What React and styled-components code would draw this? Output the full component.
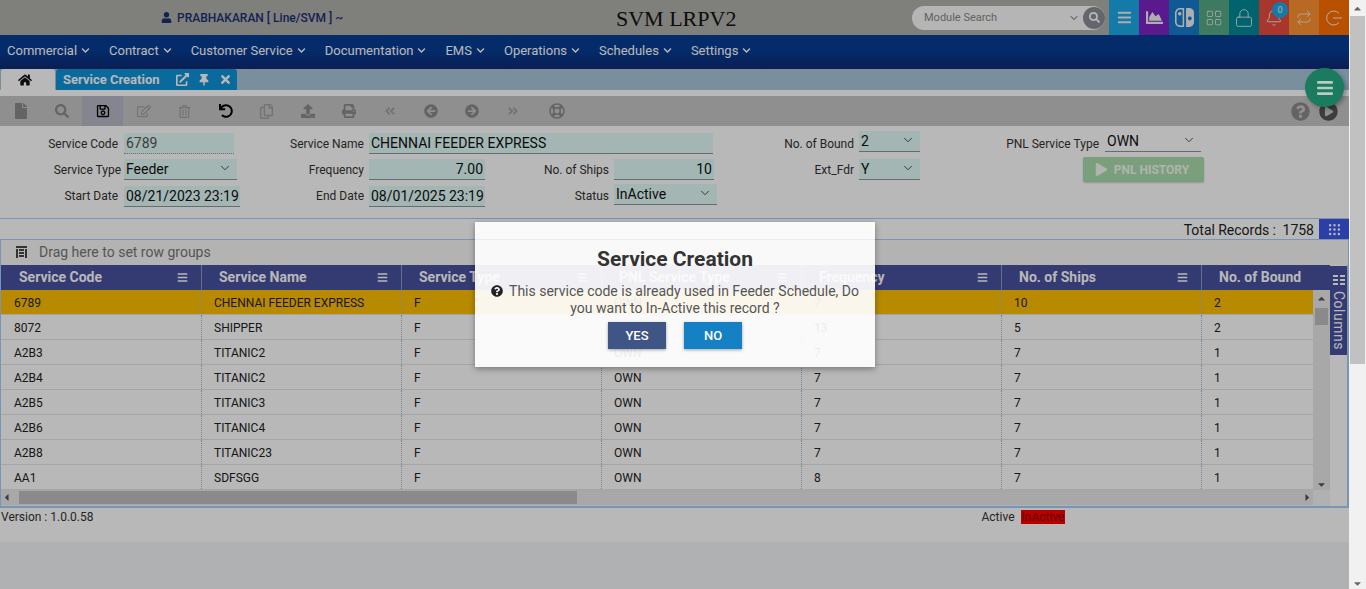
import React from 'react'
import styled, { createGlobalStyle } from 'styled-components'
import {
  FaUser, FaHome, FaExternalLinkAlt, FaThumbtack, FaTimes, FaFile, FaSearch, FaRegSave, FaRegEdit,
  FaRegTrashAlt, FaUndo, FaRegCopy, FaUpload, FaPrint, FaAngleDoubleLeft, FaAngleDoubleRight,
  FaArrowCircleLeft, FaArrowCircleRight, FaRegLifeRing, FaQuestionCircle, FaPlayCircle, FaPlay, FaBars,
  FaChartArea, FaChevronDown, FaCaretUp, FaCaretDown, FaCaretLeft, FaCaretRight,
} from 'react-icons/fa'
import { BsNintendoSwitch } from 'react-icons/bs'
import { LayoutGrid, Lock, Bell, Repeat, ChevronDown, Grip } from 'lucide-react'

const Global = createGlobalStyle`
  html, body { margin: 0; padding: 0; height: 589px; overflow: hidden; }
  body { font-family: Roboto, "Liberation Sans", sans-serif; color: #222; }
`
const Shell = styled.div`
  display: flex;
  width: 1366px;
  height: 589px;
`
const Page = styled.div`
  position: relative;
  width: 1349px;
  height: 589px;
  overflow: hidden;
  background: #f4f6f8;
`
const Overlay = styled.div`
  position: absolute;
  inset: 0;
  background: rgba(0, 0, 0, 0.28);
`
const TopBar = styled.div`
  display: flex;
  align-items: center;
  height: 35px;
  background: #b0b0ab;
`
const UserName = styled.div`
  display: flex;
  align-items: center;
  gap: 5px;
  width: 616px;
  padding-left: 161px;
  box-sizing: border-box;
  font-size: 12px;
  font-weight: 500;
  color: #1c2f74;
`
const Brand = styled.div`
  width: 296px;
  padding-top: 3px;
  font-family: "Liberation Serif", "DejaVu Serif", serif;
  font-size: 22px;
  color: #111;
`
const SearchBox = styled.div`
  display: flex;
  align-items: center;
  justify-content: space-between;
  width: 193px;
  height: 24px;
  margin-right: 4px;
  padding-left: 12px;
  box-sizing: border-box;
  border-radius: 12px;
  background: #fbfbfb;
  font-size: 11px;
  color: #888;
`
const SearchEnd = styled.span`
  display: flex;
  align-items: center;
  gap: 3px;
  color: #555;
`
const SearchBtn = styled.span`
  display: flex;
  align-items: center;
  justify-content: center;
  width: 22px;
  height: 22px;
  border-radius: 50%;
  background: #8a8f96;
  color: #fff;
`
const IconBlock = styled.div`
  position: relative;
  display: flex;
  align-items: center;
  justify-content: center;
  width: 30px;
  height: 35px;
  background: ${p => p.$bg};
  color: #f2f2f2;
`
const Badge = styled.span`
  position: absolute;
  top: 2px;
  right: 1px;
  width: 16px;
  height: 16px;
  border-radius: 50%;
  background: #1da9e9;
  font-size: 9px;
  line-height: 16px;
  text-align: center;
`
const Nav = styled.div`
  display: flex;
  align-items: center;
  height: 34px;
  padding: 0 0 4px 7px;
  box-sizing: border-box;
  background: linear-gradient(#063e95 40%, #0e2b76);
`
const NavItem = styled.div`
  display: flex;
  align-items: center;
  gap: 4px;
  margin-right: 19px;
  font-size: 13px;
  color: #fff;
`
const TabBar = styled.div`
  display: flex;
  align-items: stretch;
  height: 21px;
  padding-left: 1px;
  background: #a9c7db;
`
const HomeTab = styled.div`
  display: flex;
  align-items: center;
  justify-content: center;
  width: 54px;
  margin-right: 1px;
  padding-right: 6px;
  box-sizing: border-box;
  border-radius: 3px 3px 0 0;
  background: #fff;
  color: #111;
`
const ActiveTab = styled.div`
  display: flex;
  align-items: center;
  width: 181px;
  padding-left: 7px;
  box-sizing: border-box;
  border-radius: 3px 3px 0 0;
  background: #0e93d9;
  font-size: 13px;
  font-weight: 700;
  color: #fff;
`
const TabTools = styled.span`
  display: flex;
  align-items: center;
  gap: 9px;
  margin-left: 16px;
`
const Strip = styled.div`
  height: 6px;
  background: #fff;
`
const Toolbar = styled.div`
  display: flex;
  align-items: stretch;
  height: 30px;
  background: #c7c7c7;
`
const ToolBtn = styled.div`
  display: flex;
  align-items: center;
  justify-content: center;
  width: ${p => p.$w || 41}px;
  background: ${p => (p.$active ? '#b9b9c8' : 'transparent')};
  color: ${p => (p.$dark ? '#000' : p.$faint ? '#a0a0a0' : '#8b8b8b')};
`
const ToolEnd = styled.div`
  display: flex;
  align-items: center;
  gap: 9px;
  margin-left: auto;
  padding-right: 11px;
  color: #8b8b8b;
`
const Form = styled.div`
  display: grid;
  grid-template-columns: 124px 116px 129px 116px 129px 103px 142px 61px 185px 99px;
  grid-template-rows: 21px 23px 22px;
  row-gap: 4px;
  height: 85px;
  padding-top: 7px;
  background: #fff;
`
const Label = styled.div`
  display: flex;
  align-items: center;
  justify-content: flex-end;
  padding-right: ${p => p.$pad ?? 6}px;
  font-size: 12px;
  white-space: nowrap;
  color: #333;
`
const Field = styled.div`
  display: flex;
  align-items: center;
  justify-content: ${p => (p.$right ? 'flex-end' : 'space-between')};
  align-self: start;
  box-sizing: border-box;
  width: ${p => p.$w}px;
  height: 21px;
  margin-top: ${p => p.$top || 0}px;
  padding: 0 2px;
  background: ${p => (p.$plain ? 'transparent' : '#e2fcf9')};
  border-bottom: 1px ${p => (p.$dotted ? 'dotted' : 'solid')} #8a9a9a;
  font-size: 14px;
  color: ${p => (p.$muted ? '#555' : '#111')};
  white-space: nowrap;
  ${p => p.$span && `grid-column: span ${p.$span};`}
`
const SelectArrow = styled(ChevronDown)`
  flex: none;
  margin: 0 3px 2px 0;
  color: #445;
`
const HistoryBtn = styled.div`
  grid-column: 9 / 11;
  justify-self: end;
  display: flex;
  align-items: center;
  justify-content: center;
  gap: 6px;
  width: 121px;
  height: 25px;
  margin-top: -1px;
  padding-right: 3px;
  box-sizing: border-box;
  border-radius: 2px;
  background: #abddac;
  box-shadow: 0 1px 2px rgba(0, 0, 0, 0.2);
  font-size: 12px;
  font-weight: 700;
  color: #f0fbf0;
`
const GridPanel = styled.div`
  height: 290px;
  box-sizing: border-box;
  border-top: 1px solid #a5cffb;
  border-bottom: 2px solid #a5cffb;
`
const TotalBar = styled.div`
  display: flex;
  align-items: center;
  justify-content: flex-end;
  height: 20px;
  border-bottom: 1px solid #a5cffb;
  background: #fff;
  font-size: 14px;
  color: #222;
`
const TotalText = styled.span`
  padding-top: 1px;
  word-spacing: -0.2px;
`
const GridBtn = styled.span`
  display: flex;
  align-items: center;
  justify-content: center;
  width: 30px;
  height: 20px;
  margin-left: 5px;
  background: #3d58e9;
  color: #fff;
`
const DragRow = styled.div`
  display: flex;
  align-items: center;
  gap: 12px;
  height: 25px;
  padding: 0 0 1px 15px;
  box-sizing: border-box;
  background: #f8f8f8;
  border-left: 1px solid #a5cffb;
  border-right: 1px solid #a5cffb;
  font-size: 14px;
  color: #777;
`
const GridArea = styled.div`
  display: flex;
  border-left: 1px solid #a5cffb;
  border-right: 2px solid #a5cffb;
  height: 241px;
`
const GridMain = styled.div`
  display: flex;
  flex-direction: column;
  width: 1329px;
  overflow: hidden;
`
const HeadRow = styled.div`
  display: flex;
  flex: none;
  height: 25px;
  background: #48519e;
`
const HeadCell = styled.div`
  display: flex;
  flex: none;
  align-items: center;
  justify-content: space-between;
  box-sizing: border-box;
  width: 200px;
  padding: 0 13px 1px 17px;
  border-left: 1px solid #8a9ac8;
  font-size: 14px;
  font-weight: 700;
  color: #fff;
  white-space: nowrap;
  &:first-child { border-left-color: transparent; }
`
const BodyWrap = styled.div`
  display: flex;
  flex: none;
  height: 200px;
`
const Rows = styled.div`
  width: 1312px;
  overflow: hidden;
  background: #fff;
`
const Row = styled.div`
  display: flex;
  height: 25px;
  box-sizing: border-box;
  border-bottom: 1px solid #e5e5e5;
  background: ${p => (p.$selected ? '#ffc000' : '#fff')};
`
const Cell = styled.div`
  display: flex;
  flex: none;
  align-items: center;
  box-sizing: border-box;
  width: 200px;
  padding: 1px 0 0 12px;
  border-left: 1px dotted #a9bcd0;
  font-size: 12px;
  color: #222;
  &:first-child { border-left-color: transparent; }
`
const VScroll = styled.div`
  display: flex;
  flex-direction: column;
  align-items: center;
  justify-content: space-between;
  width: 17px;
  background: #e9e9e9;
  color: #555;
  font-size: 10px;
`
const VThumb = styled.div`
  width: 13px;
  height: 17px;
  margin-top: 4px;
  background: #c0c0c0;
`
const VTop = styled.div`
  display: flex;
  flex-direction: column;
  align-items: center;
  padding-top: 3px;
`
const HScroll = styled.div`
  display: flex;
  flex: none;
  align-items: center;
  height: 15px;
  width: 1312px;
  background: #e9e9e9;
  color: #555;
  font-size: 10px;
`
const HThumb = styled.div`
  width: 558px;
  height: 13px;
  margin-left: 7px;
  margin-right: auto;
  background: #c0c0c0;
`
const SideBar = styled.div`
  flex: none;
  width: 17px;
  background: #fff;
`
const ColumnsTab = styled.div`
  display: flex;
  flex-direction: column;
  align-items: center;
  gap: 6px;
  height: 89px;
  margin-top: 1px;
  padding-top: 9px;
  box-sizing: border-box;
  background: #48519e;
  color: #fff;
  font-size: 14px;
`
const VerticalText = styled.span`
  writing-mode: vertical-rl;
  letter-spacing: 0.5px;
`
const Footer = styled.div`
  display: flex;
  align-items: center;
  height: 34px;
  padding: 0 0 16px 1px;
  box-sizing: border-box;
  background: #fff;
  font-size: 12px;
  color: #333;
`
const StatusKey = styled.div`
  display: flex;
  align-items: center;
  gap: 6px;
  margin-left: 888px;
`
const RedChip = styled.span`
  padding: 0 1px;
  background: #ff0000;
  color: #8a0000;
`
const Fab = styled.div`
  position: absolute;
  top: 68px;
  left: 1305px;
  display: flex;
  align-items: center;
  justify-content: center;
  width: 39px;
  height: 39px;
  border-radius: 50%;
  background: #1b7b5f;
  box-shadow: 2px 2px 4px rgba(0, 0, 0, 0.3);
  color: #b9cbc4;
`
const Modal = styled.div`
  position: absolute;
  top: 222px;
  left: 475px;
  width: 400px;
  height: 145px;
  box-sizing: border-box;
  background: rgba(255, 255, 255, 0.92);
  box-shadow: 0 2px 6px rgba(0, 0, 0, 0.35);
  text-align: center;
`
const ModalRule = styled.div`
  height: 17px;
  border-bottom: 1px solid rgba(0, 0, 0, 0.04);
`
const ModalTitle = styled.div`
  margin-top: 7px;
  font-size: 21px;
  font-weight: 700;
  line-height: 24px;
  color: #333;
`
const ModalText = styled.div`
  width: 372px;
  margin: 12px auto 0;
  font-size: 14px;
  line-height: 16px;
  color: #555;
`
const ModalIcon = styled.span`
  display: inline-block;
  margin-right: 6px;
  color: #222;
  vertical-align: -1px;
`
const ModalActions = styled.div`
  display: flex;
  justify-content: center;
  gap: 18px;
  margin-top: 6px;
`
const ModalBtn = styled.div`
  width: 58px;
  height: 27px;
  background: ${p => p.$bg};
  box-shadow: 0 1px 3px rgba(0, 0, 0, 0.35);
  font-size: 13px;
  font-weight: 500;
  line-height: 27px;
  color: #fff;
`
const Scrollbar = styled.div`
  display: flex;
  flex-direction: column;
  align-items: center;
  justify-content: space-between;
  width: 17px;
  height: 589px;
  background: #f1f1f1;
  color: #666;
  font-size: 10px;
`
const ScrollThumb = styled.div`
  width: 15px;
  height: 348px;
  margin-top: 2px;
  background: #c1c1c1;
`
const ScrollTop = styled.div`
  display: flex;
  flex-direction: column;
  align-items: center;
  padding-top: 3px;
`

const menus = ['Commercial', 'Contract', 'Customer Service', 'Documentation', 'EMS', 'Operations', 'Schedules', 'Settings']
const heads = ['Service Code', 'Service Name', 'Service Type', 'PNL Service Type', 'Frequency', 'No. of Ships', 'No. of Bound']
const rows = [
  ['6789', 'CHENNAI FEEDER EXPRESS', 'F', 'OWN', '7', '10', '2'],
  ['8072', 'SHIPPER', 'F', 'SP', '13', '5', '2'],
  ['A2B3', 'TITANIC2', 'F', 'OWN', '7', '7', '1'],
  ['A2B4', 'TITANIC2', 'F', 'OWN', '7', '7', '1'],
  ['A2B5', 'TITANIC3', 'F', 'OWN', '7', '7', '1'],
  ['A2B6', 'TITANIC4', 'F', 'OWN', '7', '7', '1'],
  ['A2B8', 'TITANIC23', 'F', 'OWN', '7', '7', '1'],
  ['AA1', 'SDFSGG', 'F', 'OWN', '8', '7', '1'],
]

const Arrow = () => <SelectArrow size={14} strokeWidth={1.6} />

// ag-grid style glyphs
const DragIcon = () => (
  <svg width="11" height="12" viewBox="0 0 11 12" fill="#333">
    <path d="M0 0h11v2H0zM0 3h2v9H0zM9 3h2v9H9zM3 3h5v2H3zM3 6h5v2H3zM3 9h5v2H3z" fillRule="evenodd" opacity=".9" />
  </svg>
)
const ColumnsIcon = () => (
  <svg width="12" height="10" viewBox="0 0 12 10" fill="currentColor">
    <path d="M0 0h5v2H0zM7 0h5v2H7zM0 4h5v2H0zM7 4h5v2H7zM0 8h5v2H0zM7 8h5v2H7z" />
  </svg>
)

export default function App() {
  return (
    <Shell>
      <Global />
      <Page>
        <TopBar>
          <UserName><FaUser size={11} />PRABHAKARAN [ Line/SVM ] ~</UserName>
          <Brand>SVM LRPV2</Brand>
          <SearchBox>
            Module Search
            <SearchEnd><ChevronDown size={12} /><SearchBtn><FaSearch size={11} /></SearchBtn></SearchEnd>
          </SearchBox>
          <IconBlock $bg="#1da9e9"><FaBars size={15} /></IconBlock>
          <IconBlock $bg="#7d24c5"><FaChartArea size={17} /></IconBlock>
          <IconBlock $bg="#157dcd"><BsNintendoSwitch size={19} /></IconBlock>
          <IconBlock $bg="#57a984"><LayoutGrid size={18} strokeWidth={1} /></IconBlock>
          <IconBlock $bg="#008999"><Lock size={20} strokeWidth={1} /></IconBlock>
          <IconBlock $bg="#e94b3d"><Bell size={18} strokeWidth={1.2} /><Badge>0</Badge></IconBlock>
          <IconBlock $bg="#ff9332"><Repeat size={16} strokeWidth={1.2} /></IconBlock>
          <IconBlock $bg="#ff6f00">
            <svg width="18" height="18" viewBox="0 0 18 18" fill="none" stroke="currentColor" strokeWidth="1">
              <path d="M14 4.5A7 7 0 1 0 14 13.5" />
              <path d="M8 9h9" />
            </svg>
          </IconBlock>
        </TopBar>
        <Nav>
          {menus.map(m => (
            <NavItem key={m}>{m}<FaChevronDown size={9} /></NavItem>
          ))}
        </Nav>
        <TabBar>
          <HomeTab><FaHome size={14} /></HomeTab>
          <ActiveTab>
            Service Creation
            <TabTools><FaExternalLinkAlt size={13} /><FaThumbtack size={12} /><FaTimes size={13} /></TabTools>
          </ActiveTab>
        </TabBar>
        <Strip />
        <Toolbar>
          <ToolBtn><FaFile size={16} /></ToolBtn>
          <ToolBtn><FaSearch size={14} /></ToolBtn>
          <ToolBtn $active $dark><FaRegSave size={14} /></ToolBtn>
          <ToolBtn $faint><FaRegEdit size={14} /></ToolBtn>
          <ToolBtn $faint><FaRegTrashAlt size={13} /></ToolBtn>
          <ToolBtn $dark><FaUndo size={14} /></ToolBtn>
          <ToolBtn $faint><FaRegCopy size={15} /></ToolBtn>
          <ToolBtn><FaUpload size={14} /></ToolBtn>
          <ToolBtn><FaPrint size={14} /></ToolBtn>
          <ToolBtn $faint><FaAngleDoubleLeft size={12} /></ToolBtn>
          <ToolBtn><FaArrowCircleLeft size={14} /></ToolBtn>
          <ToolBtn><FaArrowCircleRight size={14} /></ToolBtn>
          <ToolBtn $faint><FaAngleDoubleRight size={12} /></ToolBtn>
          <ToolBtn $w={47}><FaRegLifeRing size={16} /></ToolBtn>
          <ToolEnd><FaQuestionCircle size={19} /><FaPlayCircle size={19} color="#555" /></ToolEnd>
        </Toolbar>
        <Form>
          <Label>Service Code</Label>
          <Field $w={110} $dotted $muted>6789</Field>
          <Label $pad={5}>Service Name</Label>
          <Field $w={344} $span={3}>CHENNAI FEEDER EXPRESS</Field>
          <Label $pad={5}>No. of Bound</Label>
          <Field $w={61} $top={-2}>2<Arrow /></Field>
          <Label>PNL Service Type</Label>
          <Field $w={96} $top={-2} $plain>OWN<Arrow /></Field>

          <Label $pad={3}>Service Type</Label>
          <Field $w={113} $top={1}>Feeder<Arrow /></Field>
          <Label $pad={5}>Frequency</Label>
          <Field $w={116} $top={1} $right>7.00</Field>
          <Label $pad={5}>No. of Ships</Label>
          <Field $w={100} $top={1} $right>10</Field>
          <Label $pad={5}>Ext_Fdr</Label>
          <Field $w={61} $top={1}>Y<Arrow /></Field>
          <HistoryBtn><FaPlay size={13} />PNL HISTORY</HistoryBtn>

          <Label>Start Date</Label>
          <Field $w={116} $top={1}>08/21/2023 23:19</Field>
          <Label $pad={5}>End Date</Label>
          <Field $w={116} $top={1}>08/01/2025 23:19</Field>
          <Label $pad={5}>Status</Label>
          <Field $w={103} $top={-1}>InActive<Arrow /></Field>
        </Form>
        <GridPanel>
          <TotalBar><TotalText>Total Records :&nbsp; 1758</TotalText><GridBtn><Grip size={15} /></GridBtn></TotalBar>
          <DragRow><DragIcon />Drag here to set row groups</DragRow>
          <GridArea>
            <GridMain>
              <HeadRow>
                {heads.map(h => (
                  <HeadCell key={h}>{h}{h !== 'No. of Bound' && <FaBars size={11} />}</HeadCell>
                ))}
              </HeadRow>
              <BodyWrap>
                <Rows>
                  {rows.map((r, i) => (
                    <Row key={r[0]} $selected={i === 0}>
                      {r.map((v, j) => <Cell key={j}>{v}</Cell>)}
                    </Row>
                  ))}
                </Rows>
                <VScroll>
                  <VTop><FaCaretUp size={11} /><VThumb /></VTop>
                  <FaCaretDown size={11} />
                </VScroll>
              </BodyWrap>
              <HScroll>
                <FaCaretLeft size={11} />
                <HThumb />
                <FaCaretRight size={11} />
              </HScroll>
            </GridMain>
            <SideBar>
              <ColumnsTab><ColumnsIcon /><VerticalText>Columns</VerticalText></ColumnsTab>
            </SideBar>
          </GridArea>
        </GridPanel>
        <Footer>
          Version : 1.0.0.58
          <StatusKey>Active <RedChip>InActive</RedChip></StatusKey>
        </Footer>
        <Overlay />
        <Fab><FaBars size={18} /></Fab>
        <Modal>
          <ModalRule />
          <ModalTitle>Service Creation</ModalTitle>
          <ModalText>
            <ModalIcon><FaQuestionCircle size={12} /></ModalIcon>
            This service code is already used in Feeder Schedule, Do you want to In-Active this record ?
          </ModalText>
          <ModalActions>
            <ModalBtn $bg="#3f5585">YES</ModalBtn>
            <ModalBtn $bg="#1580c3">NO</ModalBtn>
          </ModalActions>
        </Modal>
      </Page>
      <Scrollbar>
        <ScrollTop><FaCaretUp size={11} /><ScrollThumb /></ScrollTop>
        <FaCaretDown size={11} />
      </Scrollbar>
    </Shell>
  )
}
